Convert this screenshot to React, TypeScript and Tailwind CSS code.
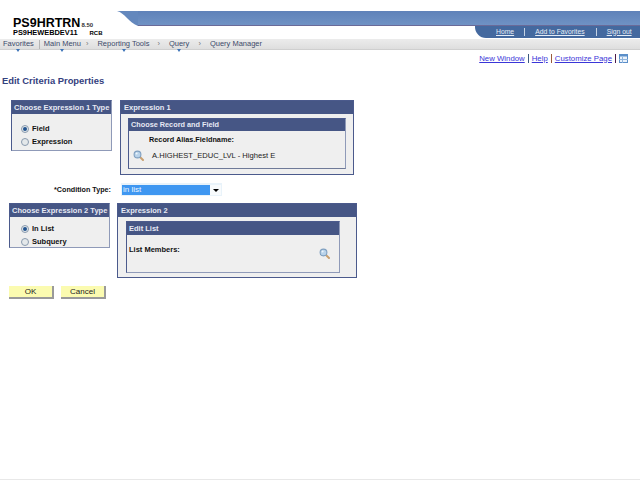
import React from "react";

const F = "font-['Liberation_Sans',Arial,sans-serif]";

function Mag({ className = "" }: { className?: string }) {
  return (
    <svg width="11" height="11" viewBox="0 0 11 11" className={className}>
      <path d="M6.5 6.5 L10 10" stroke="#c9a070" strokeWidth="2" strokeLinecap="round" />
      <circle cx="4.5" cy="4.5" r="3.4" fill="#b9d3ea" stroke="#7f9fc0" strokeWidth="1.1" />
      <circle cx="3.6" cy="3.6" r="1" fill="#eef6fc" />
    </svg>
  );
}

function Radio({ on, label }: { on?: boolean; label: string }) {
  return (
    <div className="flex items-center h-[13px]">
      <span className="w-[8px] h-[8px] rounded-full border border-[#8a9aae] bg-[#e4e8ea] flex items-center justify-center mr-[3px] shrink-0">
        {on && <span className="w-[4px] h-[4px] rounded-full bg-[#23538f]" />}
      </span>
      <span className="text-[7.5px] font-bold text-[#111] leading-none">{label}</span>
    </div>
  );
}

function TypeBox({ title, a, b, h, pad }: { title: string; a: string; b: string; h: string; pad: string }) {
  return (
    <div className={`w-[101px] ${h} bg-[#efefef] border border-[#4b5a8c] border-b-[#8f9ab8] border-r-[#8f9ab8] shrink-0`}>
      <div className="h-[13px] bg-[#465685] text-[#e6e9f4] text-[7.5px] font-bold leading-[13px] pl-[2px] whitespace-nowrap">{title}</div>
      <div className={pad}>
        <Radio on label={a} />
        <Radio label={b} />
      </div>
    </div>
  );
}

function Link({ children, white }: { children: React.ReactNode; white?: boolean }) {
  return <span className={`underline leading-none whitespace-nowrap ${white ? "text-[#e4ecf6] text-[6.8px]" : "text-[#3a36d8] text-[7.8px]"}`}>{children}</span>;
}

function Button({ label }: { label: string }) {
  return (
    <div className="w-[45px] h-[13px] bg-[#fbfbb0] border-r-2 border-b-2 border-[#9a9a9a] text-[8px] text-[#222] leading-[12px] text-center">{label}</div>
  );
}

function NavMenu({ label, arrow }: { label: string; arrow: string }) {
  return (
    <span className="relative">
      {label}
      <span className={`absolute top-[9px] ${arrow} border-x-[2.5px] border-x-transparent border-t-[3px] border-t-[#3d74b8]`} />
    </span>
  );
}

export default function App() {
  return (
    <div className={`w-[640px] h-[480px] bg-white overflow-hidden ${F} flex flex-col`}>
      {/* header */}
      <div className="h-[39px] flex">
        <div className="w-[117px] shrink-0 pt-[16px] pl-[13px] text-black font-bold">
          <div className="flex items-end leading-none h-[13px]">
            <span className="text-[12.5px] leading-none">PS9HRTRN</span>
            <span className="text-[6px] ml-[1px] text-[#333] leading-[8px]">8.50</span>
          </div>
          <div className="flex text-[7.4px] mt-[-2px] leading-[10px] whitespace-nowrap pt-[1px]">
            <span>PS9HEWEBDEV11</span>
            <span className="ml-[12px] text-[6px]">RCB</span>
          </div>
        </div>
        <div className="flex-1 pt-[11px] flex flex-col">
          <div className="h-[15px] flex">
            <svg width="21" height="15" viewBox="0 0 21 15" className="shrink-0">
              <path d="M0 0 C8 2 11 11 21 15 L21 0 Z" fill="#6488bd" />
            </svg>
            <div className="flex-1 bg-gradient-to-b from-[#5f82b9] to-[#6f92c4] border-b border-[#6a6a98]" />
          </div>
          <div className="h-[13px] flex justify-end">
            <div className="w-[165px] h-[12px] bg-[#44699f] rounded-bl-[11px] flex items-center pl-[21px]">
              <Link white>Home</Link>
              <span className="w-px h-[8px] bg-[#c5d3e5] ml-[10px] mr-[10px]" />
              <Link white>Add to Favorites</Link>
              <span className="w-px h-[8px] bg-[#c5d3e5] ml-[11px] mr-[10px]" />
              <Link white>Sign out</Link>
            </div>
          </div>
        </div>
      </div>
      {/* nav */}
      <div className="h-[11px] bg-gradient-to-b from-[#ececec] to-[#dedede] border-b border-[#cfcfcf] flex items-center pl-[3px] text-[7.5px] text-[#3c4a6a] leading-none whitespace-nowrap">
        <NavMenu label="Favorites" arrow="left-[13px]" />
        <span className="w-px h-[9px] bg-[#b5b5b5] ml-[5px] mr-[4px]" />
        <NavMenu label="Main Menu" arrow="left-[16px]" />
        <span className="ml-[5px] mr-[9px] text-[#777]">›</span>
        <NavMenu label="Reporting Tools" arrow="left-[25px]" />
        <span className="ml-[8px] mr-[9px] text-[#777]">›</span>
        <NavMenu label="Query" arrow="left-[8px]" />
        <span className="ml-[9px] mr-[9px] text-[#777]">›</span>
        <span>Query Manager</span>
      </div>
      {/* toolbar */}
      <div className="h-[13px] mt-[2px] flex justify-end items-center pr-[12px]">
        <Link>New Window</Link>
        <span className="w-px h-[9px] bg-[#3d5a80] mx-[3px]" />
        <Link>Help</Link>
        <span className="w-px h-[9px] bg-[#9a5a3a] mx-[3px]" />
        <Link>Customize Page</Link>
        <span className="w-px h-[9px] bg-[#4a1a4a] mx-[3px]" />
        <svg width="9" height="9" viewBox="0 0 9 9">
          <rect x="0.5" y="0.5" width="8" height="8" fill="#eaf2fb" stroke="#5b8fc9" />
          <rect x="0" y="0" width="9" height="2.5" fill="#5b8fc9" />
          <path d="M3.5 3 V9 M0 5.5 H9" stroke="#8fb4dc" />
        </svg>
      </div>
      <div className="mt-[10px] pl-[2px] h-[12px] text-[9.4px] font-bold text-[#34417e] leading-[12px]">Edit Criteria Properties</div>

      {/* row 1 */}
      <div className="mt-[13px] ml-[11px] flex items-start gap-[8px]">
        <TypeBox title="Choose Expression 1 Type" a="Field" b="Expression" h="h-[51px]" pad="pl-[9px] pt-[8px]" />
        <div className="w-[234px] h-[75px] bg-[#efefef] border border-[#4b5a8c]">
          <div className="h-[13px] bg-[#465685] text-[#e6e9f4] text-[7.5px] font-bold leading-[13px] pl-[3px]">Expression 1</div>
          <div className="mt-[4px] ml-[7px] w-[218px] h-[51px] border border-[#4b5a8c] border-r-[#8f9ab8] border-b-[#6f7a98]">
            <div className="h-[12px] bg-[#465685] text-[#e6e9f4] text-[7.3px] font-bold leading-[12px] pl-[2px]">Choose Record and Field</div>
            <div className="pl-[20px] pt-[4px] text-[7.3px] font-bold text-[#111] leading-[10px]">Record Alias.Fieldname:</div>
            <div className="flex items-center mt-[5px] pl-[4px]">
              <Mag />
              <span className="ml-[8px] text-[7.6px] text-[#222] leading-[10px] whitespace-nowrap">A.HIGHEST_EDUC_LVL - Highest E</span>
            </div>
          </div>
        </div>
      </div>

      {/* condition */}
      <div className="mt-[8px] flex items-center h-[13px]">
        <div className="w-[111px] text-right text-[7.2px] font-bold text-[#111] leading-none">*Condition Type:</div>
        <div className="ml-[10px] w-[101px] h-[13px] bg-[#e9f3fa] pt-[2px] pb-px px-px flex">
          <div className="flex-1 bg-[#3f97f1] text-[#eef6ff] text-[8px] leading-[10px] pl-px">in list</div>
          <div className="w-[11px] bg-[#f8fbfd] flex items-center justify-end pr-[2px]">
            <span className="border-x-[3px] border-x-transparent border-t-[3px] border-t-black" />
          </div>
        </div>
      </div>

      {/* row 2 */}
      <div className="mt-[7px] ml-[9px] flex items-start gap-[7px]">
        <TypeBox title="Choose Expression 2 Type" a="In List" b="Subquery" h="h-[45px]" pad="pl-[11px] pt-[5px]" />
        <div className="w-[240px] h-[75px] bg-[#efefef] border border-[#4b5a8c]">
          <div className="h-[13px] bg-[#465685] text-[#e6e9f4] text-[7.5px] font-bold leading-[13px] pl-[3px]">Expression 2</div>
          <div className="mt-[4px] ml-[8px] w-[214px] h-[52px] border border-[#4b5a8c] border-r-[#8f9ab8] border-b-[#8f9ab8]">
            <div className="h-[13px] bg-[#465685] text-[#e6e9f4] text-[7.5px] font-bold leading-[13px] pl-[2px]">Edit List</div>
            <div className="flex justify-between pl-[2px] pr-[9px] pt-[10px]">
              <span className="text-[7.5px] font-bold text-[#111] leading-[10px]">List Members:</span>
              <Mag className="mt-[3px]" />
            </div>
          </div>
        </div>
      </div>

      {/* buttons */}
      <div className="mt-[8px] ml-[9px] flex gap-[7px]">
        <Button label="OK" />
        <Button label="Cancel" />
      </div>
      <div className="flex-1 border-b border-[#e8e8e8]" />
    </div>
  );
}
